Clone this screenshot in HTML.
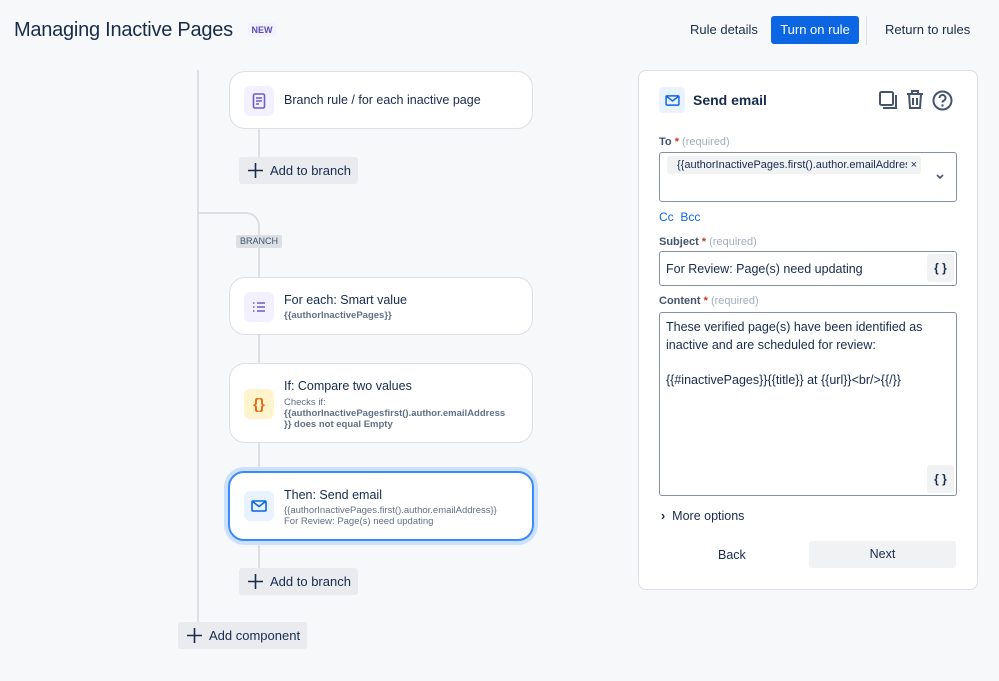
<!DOCTYPE html>
<html><head><meta charset="utf-8"><style>
*{box-sizing:border-box;margin:0;padding:0}
body{width:999px;height:681px;background:#f7f8f9;font-family:"Liberation Sans",sans-serif;color:#172b4d;position:relative;overflow:hidden}
.a{position:absolute}
.card{position:absolute;left:229px;width:304px;background:#fff;border:1px solid #dcdfe4;border-radius:16px}
.ic{position:absolute;left:14px;width:30px;height:30px;border-radius:6px;display:flex;align-items:center;justify-content:center}
.t{position:absolute;left:54px;font-size:12.5px;color:#172b4d}
.s{font-size:9.5px;color:#626f86;line-height:11px}
.btn{position:absolute;background:#e9ebee;border-radius:3px;font-size:13px;display:flex;align-items:center;color:#172b4d}
.btn svg{margin-right:7px}
.vl{position:absolute;width:2px;background:#dcdfe4}
.lbl{position:absolute;left:659px;font-size:11px;font-weight:bold;color:#44546f}
.lbl i{color:#c9372c;font-style:normal}
.lbl span{color:#a5adba;font-weight:normal}
.inp{position:absolute;left:659px;width:298px;border:1px solid #8590a2;border-radius:3px;background:#fff}
.cb{position:absolute;width:27px;height:28px;background:#f1f2f4;border-radius:3px;font-size:12px;font-weight:bold;display:flex;align-items:center;justify-content:center;color:#172b4d}
</style></head><body>
<div class="a" style="left:14px;top:19px;font-size:20px;letter-spacing:-0.25px;color:#172b4d">Managing Inactive Pages</div>
<div class="a" style="left:248px;top:23px;width:28px;height:14px;background:#f3f0ff;color:#5e4db2;font-size:9px;font-weight:bold;text-align:center;line-height:14px;border-radius:3px">NEW</div>
<div class="a" style="left:690px;top:22px;font-size:13px">Rule details</div>
<div class="a" style="left:771px;top:16px;width:88px;height:28px;background:#0c66e4;color:#fff;font-size:13px;text-align:center;line-height:28px;border-radius:3px">Turn on rule</div>
<div class="a" style="left:866px;top:16px;width:1px;height:29px;background:#dcdfe4"></div>
<div class="a" style="left:885px;top:22px;font-size:13px">Return to rules</div>

<div class="vl" style="left:197px;top:70px;height:552px"></div>
<div class="vl" style="left:258px;top:128px;height:30px"></div>
<div class="a" style="left:198px;top:212px;width:62px;height:40px;border-top:2px solid #dcdfe4;border-right:2px solid #dcdfe4;border-top-right-radius:14px"></div>
<div class="vl" style="left:258px;top:250px;height:320px"></div>
<div class="a" style="left:236px;top:235px;width:46px;height:13px;background:#dcdfe4;border-radius:2px;font-size:9px;color:#44546f;text-align:center;line-height:13px">BRANCH</div>

<div class="card" style="top:71px;height:58px">
 <div class="ic" style="top:14px;background:#f3f0ff"><svg width="14" height="16" viewBox="0 0 14 16"><rect x="1.5" y="1" width="11" height="14" rx="1.5" fill="none" stroke="#6e5dc6" stroke-width="1.6"/><path d="M4 5h6M4 8h6M4 11h3" stroke="#6e5dc6" stroke-width="1.4"/></svg></div>
 <div class="t" style="top:21px">Branch rule / for each inactive page</div>
</div>
<div class="btn" style="left:239px;top:157px;width:119px;height:27px;padding-left:9px"><svg width="15" height="15" viewBox="0 0 15 15"><path d="M7.5 0v15M0 7.5h15" stroke="#172b4d" stroke-width="1.6"/></svg>Add to branch</div>

<div class="card" style="top:277px;height:58px">
 <div class="ic" style="top:14px;background:#f3f0ff"><svg width="12" height="10" viewBox="0 0 12 10"><path d="M0 1h1.5M0 5h1.5M0 9h1.5M4 1h8M4 5h8M4 9h8" stroke="#6e5dc6" stroke-width="1.4"/></svg></div>
 <div class="t" style="top:15px">For each: Smart value<div class="s" style="font-weight:bold;margin-top:3px">{{authorInactivePages}}</div></div>
</div>

<div class="card" style="top:363px;height:80px">
 <div class="ic" style="top:25px;background:#fff4cc;color:#e56910;font-size:15px;font-weight:bold">{}</div>
 <div class="t" style="top:15px">If: Compare two values<div class="s" style="margin-top:4px">Checks if:<br><b>{{authorInactivePagesfirst().author.emailAddress<br>}} does not equal Empty</b></div></div>
</div>

<div class="card" style="top:471px;height:70px;border:2px solid #388bff;box-shadow:0 0 0 4px #cce0ff;left:228px;width:306px">
 <div class="ic" style="top:18px;background:#e9f2ff"><svg width="16" height="12" viewBox="0 0 16 12"><rect x="1" y="1" width="14" height="10" rx="1" fill="none" stroke="#0c66e4" stroke-width="1.6"/><path d="M1.5 1.5l6.5 5 6.5-5" fill="none" stroke="#0c66e4" stroke-width="1.6"/></svg></div>
 <div class="t" style="top:15px">Then: Send email<div class="s" style="margin-top:3px">{{authorInactivePages.first().author.emailAddress}}<br>For Review: Page(s) need updating</div></div>
</div>
<div class="btn" style="left:239px;top:568px;width:119px;height:27px;padding-left:9px"><svg width="15" height="15" viewBox="0 0 15 15"><path d="M7.5 0v15M0 7.5h15" stroke="#172b4d" stroke-width="1.6"/></svg>Add to branch</div>
<div class="btn" style="left:178px;top:622px;width:129px;height:27px;padding-left:9px"><svg width="15" height="15" viewBox="0 0 15 15"><path d="M7.5 0v15M0 7.5h15" stroke="#172b4d" stroke-width="1.6"/></svg>Add component</div>

<div class="a" style="left:638px;top:70px;width:340px;height:520px;background:#fff;border:1px solid #dcdfe4;border-radius:8px"></div>
<div class="a" style="left:659px;top:87px;width:26px;height:26px;background:#e9f2ff;border-radius:4px;display:flex;align-items:center;justify-content:center"><svg width="15" height="11" viewBox="0 0 16 12"><rect x="1" y="1" width="14" height="10" rx="1" fill="none" stroke="#0c66e4" stroke-width="1.6"/><path d="M1.5 1.5l6.5 5 6.5-5" fill="none" stroke="#0c66e4" stroke-width="1.6"/></svg></div>
<div class="a" style="left:693px;top:92px;font-size:14px;font-weight:bold">Send email</div>
<svg class="a" style="left:878px;top:90px" width="20" height="20" viewBox="0 0 20 20"><rect x="2" y="2" width="13" height="13" rx="1.5" fill="none" stroke="#44546f" stroke-width="2"/><path d="M18 5v13H5" fill="none" stroke="#44546f" stroke-width="2"/></svg>
<svg class="a" style="left:906px;top:89px" width="18" height="21" viewBox="0 0 18 21"><path d="M1 5h16M6 5V2h6v3M3 5l1 14h10l1-14M7 9v7M11 9v7" fill="none" stroke="#44546f" stroke-width="2"/></svg>
<svg class="a" style="left:932px;top:90px" width="21" height="21" viewBox="0 0 21 21"><circle cx="10.5" cy="10.5" r="9" fill="none" stroke="#44546f" stroke-width="2"/><path d="M7.5 8a3 3 0 1 1 4 2.8c-.8.4-1 .9-1 1.7" fill="none" stroke="#44546f" stroke-width="2"/><circle cx="10.5" cy="15.5" r="1.2" fill="#44546f"/></svg>

<div class="lbl" style="top:136px">To <i>*</i> <span>(required)</span></div>
<div class="inp" style="top:152px;height:50px"></div>
<div class="a" style="left:667px;top:156px;width:254px;height:18px;background:#f1f2f4;border-radius:3px;font-size:11px;line-height:18px;padding-left:10px;color:#172b4d;white-space:nowrap;overflow:hidden">{{authorInactivePages.first().author.emailAddres<span style="position:absolute;right:4px;top:0;background:#f1f2f4;padding-left:4px">×</span></div>
<svg class="a" style="left:935px;top:173px" width="10" height="8" viewBox="0 0 10 8"><path d="M2 2l3 3 3-3" fill="none" stroke="#44546f" stroke-width="1.6"/></svg>
<div class="a" style="left:659px;top:210px;font-size:12px;color:#0c66e4">Cc&nbsp;&nbsp;Bcc</div>
<div class="lbl" style="top:236px">Subject <i>*</i> <span>(required)</span></div>
<div class="inp" style="top:251px;height:35px;font-size:12.5px;padding:10px 0 0 6px">For Review: Page(s) need updating</div>
<div class="cb" style="left:927px;top:254px">{ }</div>
<div class="lbl" style="top:295px">Content <i>*</i> <span>(required)</span></div>
<div class="inp" style="top:312px;height:184px;font-size:12.5px;padding:6px 6px;line-height:17.5px">These verified page(s) have been identified as inactive and are scheduled for review:<br><br>{{#inactivePages}}{{title}} at {{url}}&lt;br/&gt;{{/}}</div>
<div class="cb" style="left:927px;top:465px">{ }</div>
<div class="a" style="left:661px;top:509px;font-size:12.5px"><span style="font-weight:bold;margin-right:7px">›</span>More options</div>
<div class="a" style="left:718px;top:548px;font-size:12.5px">Back</div>
<div class="a" style="left:809px;top:541px;width:147px;height:27px;background:#f1f2f4;border-radius:3px;font-size:12.5px;text-align:center;line-height:27px">Next</div>
</body></html>
